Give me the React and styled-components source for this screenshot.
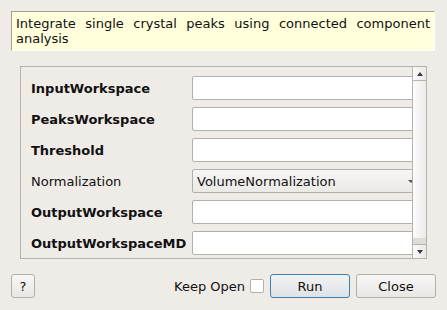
import React from "react";
import styled, { createGlobalStyle } from "styled-components";

const Global = createGlobalStyle`
  html, body { margin: 0; padding: 0; background: #efebe7; }
  body { font-family: "DejaVu Sans", sans-serif; font-size: 13px; color: #1a1a1a; }
  * { box-sizing: border-box; }
`;

const Page = styled.div`
  width: 447px;
  height: 310px;
  padding: 11px 11px 12px 11px;
  display: flex;
  flex-direction: column;
  overflow: hidden;
`;

const Banner = styled.div`
  height: 40px;
  margin-right: 1px;
  background: #ffffdc;
  border-top: 1px solid #a09d99;
  border-left: 1px solid #a09d99;
  border-right: 1px solid #ffffff;
  border-bottom: 1px solid #ffffff;
  padding: 4px 4px 0 4px;
  line-height: 15px;
  text-align: justify;
  color: #111;
`;

const Panel = styled.div`
  margin: 15px 9px 0 9px;
  height: 193px;
  border: 1px solid #b6b2ad;
  display: flex;
  overflow: hidden;
`;

const Viewport = styled.div`
  flex: 1;
  overflow: hidden;
  padding: 9px 0 0 10px;
`;

const Form = styled.div`
  display: grid;
  grid-template-columns: 161px 240px;
  grid-auto-rows: 24px;
  row-gap: 7px;
  width: 410px;
`;

const Label = styled.div`
  display: flex;
  align-items: center;
  font-weight: ${(p) => (p.$bold ? "bold" : "normal")};
  color: #111;
  white-space: nowrap;
`;

const TextInput = styled.div`
  background: #ffffff;
  border: 1px solid #b3afab;
  border-radius: 2px;
`;

const Combo = styled.div`
  position: relative;
  background: linear-gradient(#f7f6f5, #ebe9e6);
  border: 1px solid #b3afab;
  border-radius: 2px;
  display: flex;
  align-items: center;
  padding-left: 4px;
  color: #111;
`;

const ComboArrow = styled.span`
  position: absolute;
  left: 215px;
  top: 10px;
  width: 0;
  height: 0;
  border-left: 3px solid transparent;
  border-right: 3px solid transparent;
  border-top: 3px solid #555;
`;

const ScrollBar = styled.div`
  width: 14px;
  border-left: 1px solid #b6b2ad;
  display: flex;
  flex-direction: column;
`;

const ScrollButton = styled.div`
  height: 14px;
  display: flex;
  align-items: center;
  justify-content: center;
  background: linear-gradient(to right, #fbfbfa, #ebe8e5);
  border-top: ${(p) => (p.$down ? "1px solid #b6b2ad" : "none")};
  border-bottom: ${(p) => (p.$down ? "none" : "1px solid #b6b2ad")};
`;

const Arrow = styled.span`
  width: 0;
  height: 0;
  border-left: 3.5px solid transparent;
  border-right: 3.5px solid transparent;
  ${(p) =>
    p.$down
      ? "border-top: 4px solid #3a3a3a;"
      : "border-bottom: 4px solid #3a3a3a;"}
`;

const Handle = styled.div`
  flex: 1;
  background: linear-gradient(to right, #fcfcfb, #eeebe8);
`;

const Track = styled.div`
  height: 6px;
  background: #dedbd8;
`;

const Footer = styled.div`
  margin-top: 15px;
  height: 24px;
  display: flex;
  align-items: center;
`;

const Button = styled.button`
  height: 24px;
  width: ${(p) => p.$w}px;
  margin-left: ${(p) => p.$ml || 0}px;
  font-family: "DejaVu Sans", sans-serif;
  font-size: 13px;
  color: #111;
  border: 1px solid ${(p) => (p.$primary ? "#3d7fb3" : "#b3afab")};
  border-radius: 3px;
  background: ${(p) =>
    p.$primary
      ? "linear-gradient(#f1f2f3, #dfe3e6)"
      : "linear-gradient(#f8f7f6, #e9e7e4)"};
  padding: 0;
`;

const Spacer = styled.div`
  flex: 1;
`;

const KeepLabel = styled.span`
  color: #111;
`;

const Check = styled.span`
  width: 14px;
  height: 14px;
  margin-left: 5px;
  background: #fff;
  border: 1px solid #b3afab;
  border-radius: 2px;
`;

const rows = [
  { label: "InputWorkspace", bold: true },
  { label: "PeaksWorkspace", bold: true },
  { label: "Threshold", bold: true },
  { label: "Normalization", bold: false, combo: "VolumeNormalization" },
  { label: "OutputWorkspace", bold: true },
  { label: "OutputWorkspaceMD", bold: true },
];

export default function App() {
  return (
    <>
      <Global />
      <Page>
        <Banner>Integrate single crystal peaks using connected component analysis</Banner>
        <Panel>
          <Viewport>
            <Form>
              {rows.map((r) => (
                <React.Fragment key={r.label}>
                  <Label $bold={r.bold}>{r.label}</Label>
                  {r.combo ? (
                    <Combo>
                      {r.combo}
                      <ComboArrow />
                    </Combo>
                  ) : (
                    <TextInput />
                  )}
                </React.Fragment>
              ))}
            </Form>
          </Viewport>
          <ScrollBar>
            <ScrollButton>
              <Arrow />
            </ScrollButton>
            <Handle />
            <Track />
            <ScrollButton $down>
              <Arrow $down />
            </ScrollButton>
          </ScrollBar>
        </Panel>
        <Footer>
          <Button $w={24}>?</Button>
          <Spacer />
          <KeepLabel>Keep Open</KeepLabel>
          <Check />
          <Button $w={80} $ml={6} $primary>Run</Button>
          <Button $w={80} $ml={6}>Close</Button>
        </Footer>
      </Page>
    </>
  );
}
